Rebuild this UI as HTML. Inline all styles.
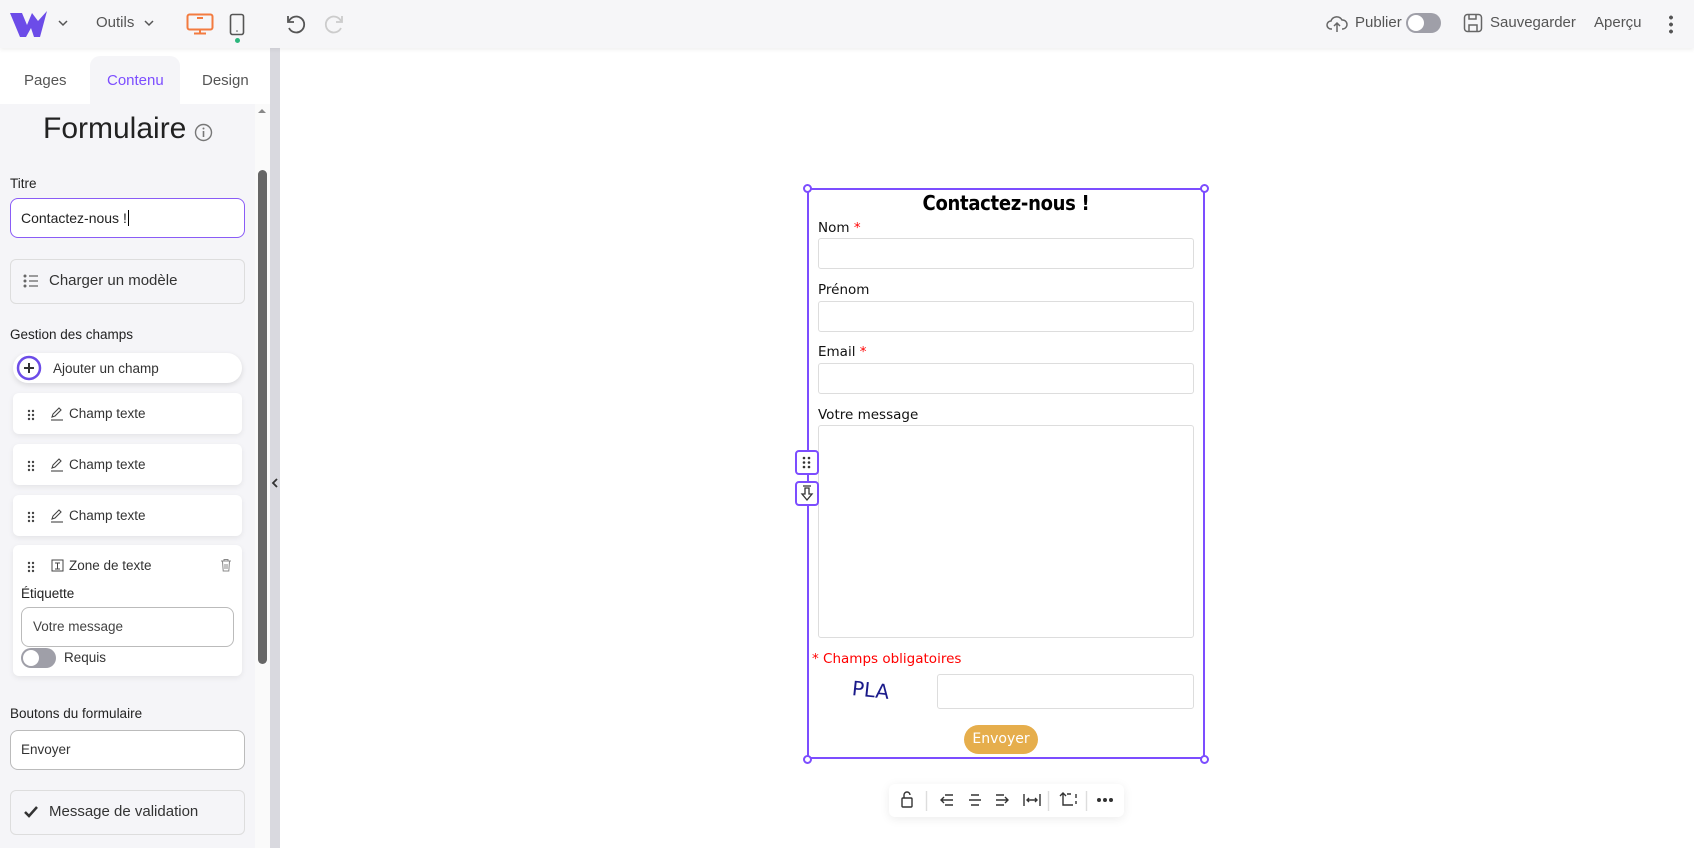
<!DOCTYPE html>
<html><head><meta charset="utf-8"><style>
*{box-sizing:border-box;margin:0;padding:0}
body{width:1694px;height:848px;overflow:hidden;background:#fff;font-family:"Liberation Sans",sans-serif;position:relative;color:#222}
.a{position:absolute}
.hdr{left:0;top:0;width:1694px;height:48px;background:#f6f6f8;box-shadow:0 2px 4px rgba(0,0,0,.06);z-index:5}
.panel{left:0;top:48px;width:255px;height:800px;background:#f5f5f8}
.card{background:#fff;border-radius:6px;box-shadow:0 2px 6px rgba(0,0,0,.07)}
.lbl{font-size:13.5px;color:#222}
.inp{border:1px solid #ddd;border-radius:3px;background:#fff}
.ftxt{font-family:"DejaVu Sans",sans-serif;font-size:13.5px;color:#111}
</style></head><body>
<div class="a hdr">
 <svg class="a" style="left:10px;top:11px" width="38" height="26" viewBox="0 0 38 26"><path d="M0 2 L12 2 L17 14 L22 2 L28 10 L37 0 L30 26 L24 26 L21 17 L16 26 L10 26 Z" fill="#6c4ce8"/></svg>
 <svg class="a" style="left:57px;top:18px" width="12" height="10"><path d="M2 3l4 4 4-4" stroke="#555" stroke-width="1.5" fill="none"/></svg>
 <div class="a" style="left:96px;top:14px;font-size:15px;color:#555">Outils</div>
 <svg class="a" style="left:143px;top:18px" width="12" height="10"><path d="M2 3l4 4 4-4" stroke="#555" stroke-width="1.5" fill="none"/></svg>
 <svg class="a" style="left:186px;top:13px" width="28" height="22"><rect x="1.5" y="1.5" width="25" height="15" rx="2" stroke="#f37b3f" stroke-width="2" fill="none"/><path d="M14 17v3M8 20.5h12M11 5h6" stroke="#f37b3f" stroke-width="2"/></svg>
 <svg class="a" style="left:229px;top:13px" width="16" height="24"><rect x="1.5" y="1.5" width="13" height="20" rx="2" stroke="#555" stroke-width="1.6" fill="none"/><circle cx="8" cy="18" r="0.8" fill="#555"/></svg>
 <div class="a" style="left:235px;top:38px;width:5px;height:5px;border-radius:50%;background:#2cb67d"></div>
 <svg class="a" style="left:284px;top:13px" width="22" height="22"><path d="M5 8a8 8 0 1 1 0 7" stroke="#555" stroke-width="1.8" fill="none"/><path d="M4 3v6h6" stroke="#555" stroke-width="1.8" fill="none"/></svg>
 <svg class="a" style="left:324px;top:13px" width="22" height="22"><path d="M17 8a8 8 0 1 0 0 7" stroke="#ccc" stroke-width="1.8" fill="none"/><path d="M18 3v6h-6" stroke="#ccc" stroke-width="1.8" fill="none"/></svg>
 <svg class="a" style="left:1326px;top:14px" width="22" height="20"><path d="M6 15H5a4 4 0 0 1 0-8 6 6 0 0 1 11-1 4.5 4.5 0 0 1 1 9h-1" stroke="#666" stroke-width="1.5" fill="none"/><path d="M11 18V9M8 12l3-3 3 3" stroke="#666" stroke-width="1.5" fill="none"/></svg>
 <div class="a" style="left:1355px;top:14px;font-size:15px;color:#555">Publier</div>
 <div class="a" style="left:1406px;top:13px;width:35px;height:20px;border-radius:10px;background:#9f9fa8"><div class="a" style="left:2px;top:2px;width:16px;height:16px;border-radius:50%;background:#fff"></div></div>
 <svg class="a" style="left:1463px;top:13px" width="20" height="20"><rect x="1.5" y="1.5" width="17" height="17" rx="3" stroke="#666" stroke-width="1.5" fill="none"/><path d="M6 2v4h7V2M6 18v-6h8v6" stroke="#666" stroke-width="1.5" fill="none"/></svg>
 <div class="a" style="left:1490px;top:14px;font-size:15px;color:#555">Sauvegarder</div>
 <div class="a" style="left:1594px;top:14px;font-size:15px;color:#555">Aperçu</div>
 <div class="a" style="left:1669px;top:14px;width:4px;height:20px;background:radial-gradient(circle,#555 1.8px,transparent 2px) 0 0/4px 7px"></div>
</div>

<div class="a" style="left:0;top:48px;width:255px;height:56px;background:#fff"></div>
<div class="a" style="left:90px;top:56px;width:90px;height:50px;background:#f5f5f8;border-radius:10px 10px 0 0"></div>
<div class="a" style="left:24px;top:72px;font-size:15px;color:#555">Pages</div>
<div class="a" style="left:107px;top:72px;font-size:15px;color:#7c4dff">Contenu</div>
<div class="a" style="left:202px;top:72px;font-size:15px;color:#555">Design</div>
<div class="a panel" style="top:104px;height:744px"></div>
<div class="a" style="left:255px;top:104px;width:15px;height:744px;background:#fafafa"></div>
<svg class="a" style="left:257px;top:107px" width="10" height="8"><path d="M1 6l4-4 4 4z" fill="#888"/></svg>
<div class="a" style="left:258px;top:170px;width:9px;height:494px;border-radius:5px;background:#666"></div>
<div class="a" style="left:270px;top:48px;width:10px;height:800px;background:#d9d9df"></div>
<svg class="a" style="left:271px;top:478px" width="8" height="10"><path d="M6 1L2 5l4 4" stroke="#333" stroke-width="1.8" fill="none"/></svg>

<div class="a" style="left:43px;top:112px;font-size:30px;color:#222">Formulaire</div>
<svg class="a" style="left:194px;top:123px" width="19" height="19"><circle cx="9.5" cy="9.5" r="8" stroke="#777" stroke-width="1.4" fill="none"/><path d="M9.5 8v6" stroke="#777" stroke-width="1.6"/><circle cx="9.5" cy="5.5" r="1" fill="#777"/></svg>
<div class="a lbl" style="left:10px;top:176px">Titre</div>
<div class="a" style="left:10px;top:198px;width:235px;height:40px;border:1.5px solid #8a5cf6;border-radius:8px;background:#fff;font-size:14px;padding:11px 10px">Contactez-nous !<span style="border-left:1px solid #000;margin-left:1px"></span></div>
<div class="a" style="left:10px;top:259px;width:235px;height:45px;border:1px solid #ddd;border-radius:6px;background:#f5f5f8"></div>
<svg class="a" style="left:23px;top:274px" width="16" height="14"><g fill="#666"><circle cx="2" cy="2" r="1.5"/><circle cx="2" cy="7" r="1.5"/><circle cx="2" cy="12" r="1.5"/></g><path d="M6 2h9M6 7h9M6 12h9" stroke="#666" stroke-width="1.2"/></svg>
<div class="a" style="left:49px;top:272px;font-size:15px;color:#333">Charger un modèle</div>
<div class="a lbl" style="left:10px;top:327px">Gestion des champs</div>
<div class="a card" style="left:13px;top:353px;width:229px;height:30px;border-radius:15px;box-shadow:0 2px 6px rgba(0,0,0,.12)"></div>
<svg class="a" style="left:16px;top:355px" width="26" height="26"><circle cx="13" cy="13" r="11" stroke="#6c4ce8" stroke-width="2.5" fill="#fff"/><path d="M13 8v10M8 13h10" stroke="#333" stroke-width="2"/></svg>
<div class="a" style="left:53px;top:361px;font-size:13.5px;color:#333">Ajouter un champ</div>

<div class="a card" style="left:13px;top:393px;width:229px;height:41px"></div>
<div class="a card" style="left:13px;top:444px;width:229px;height:41px"></div>
<div class="a card" style="left:13px;top:495px;width:229px;height:41px"></div>
<div class="a card" style="left:13px;top:545px;width:229px;height:131px"></div>
<svg width="0" height="0" style="position:absolute"><defs><g id="dr" fill="#444"><circle cx="2" cy="2" r="1.2"/><circle cx="6" cy="2" r="1.2"/><circle cx="2" cy="6" r="1.2"/><circle cx="6" cy="6" r="1.2"/><circle cx="2" cy="10" r="1.2"/><circle cx="6" cy="10" r="1.2"/></g><g id="pn"><path d="M2 11l1-3 6-6 2 2-6 6z" stroke="#444" stroke-width="1.1" fill="none"/><path d="M1 14h12" stroke="#444" stroke-width="1.1"/></g></defs></svg>
<svg class="a" style="left:27px;top:409px" width="8" height="12"><use href="#dr"/></svg>
<svg class="a" style="left:50px;top:406px" width="14" height="15"><use href="#pn"/></svg>
<div class="a" style="left:69px;top:406px;font-size:13.5px;color:#333">Champ texte</div>
<svg class="a" style="left:27px;top:460px" width="8" height="12"><use href="#dr"/></svg>
<svg class="a" style="left:50px;top:457px" width="14" height="15"><use href="#pn"/></svg>
<div class="a" style="left:69px;top:457px;font-size:13.5px;color:#333">Champ texte</div>
<svg class="a" style="left:27px;top:511px" width="8" height="12"><use href="#dr"/></svg>
<svg class="a" style="left:50px;top:508px" width="14" height="15"><use href="#pn"/></svg>
<div class="a" style="left:69px;top:508px;font-size:13.5px;color:#333">Champ texte</div>
<svg class="a" style="left:27px;top:561px" width="8" height="12"><use href="#dr"/></svg>
<svg class="a" style="left:50px;top:558px" width="15" height="15"><rect x="2" y="2" width="11" height="11" stroke="#444" fill="none"/><path d="M5 5h5M7.5 5v6M5 11h5" stroke="#444"/></svg>
<div class="a" style="left:69px;top:558px;font-size:13.5px;color:#333">Zone de texte</div>
<svg class="a" style="left:220px;top:558px" width="12" height="14"><path d="M1 3h10M4 3V1.5h4V3M2.5 3.5l.7 9.5h5.6l.7-9.5M5 6v5M7 6v5" stroke="#888" fill="none"/></svg>
<div class="a lbl" style="left:21px;top:586px">Étiquette</div>
<div class="a" style="left:21px;top:607px;width:213px;height:40px;border:1px solid #bbb;border-radius:8px;background:#fff;font-size:13.5px;padding:11px 11px;color:#444">Votre message</div>
<div class="a" style="left:21px;top:648px;width:35px;height:20px;border-radius:10px;background:#9f9fa8"><div class="a" style="left:2px;top:2px;width:16px;height:16px;border-radius:50%;background:#fff"></div></div>
<div class="a" style="left:64px;top:650px;font-size:13.5px;color:#333">Requis</div>

<div class="a lbl" style="left:10px;top:706px">Boutons du formulaire</div>
<div class="a" style="left:10px;top:730px;width:235px;height:40px;border:1px solid #bbb;border-radius:8px;background:#fff;font-size:13.5px;padding:11px 10px;color:#333">Envoyer</div>
<div class="a" style="left:10px;top:790px;width:235px;height:45px;border:1px solid #ddd;border-radius:6px;background:#f5f5f8"></div>
<svg class="a" style="left:23px;top:805px" width="16" height="14"><path d="M2 7l4 4 8-9" stroke="#333" stroke-width="2.5" fill="none"/></svg>
<div class="a" style="left:49px;top:803px;font-size:15px;color:#333">Message de validation</div>

<!-- form -->
<div class="a" style="left:807px;top:188px;width:398px;height:571px;border:2px solid #7c4dff"></div>
<div class="a" style="left:803px;top:184px;width:9px;height:9px;border:2px solid #7c4dff;border-radius:50%;background:#fff"></div>
<div class="a" style="left:1200px;top:184px;width:9px;height:9px;border:2px solid #7c4dff;border-radius:50%;background:#fff"></div>
<div class="a" style="left:803px;top:755px;width:9px;height:9px;border:2px solid #7c4dff;border-radius:50%;background:#fff"></div>
<div class="a" style="left:1200px;top:755px;width:9px;height:9px;border:2px solid #7c4dff;border-radius:50%;background:#fff"></div>
<div class="a" style="left:807px;top:191px;width:398px;text-align:center;font-size:20px;font-weight:bold;color:#000;font-family:'DejaVu Sans Condensed','DejaVu Sans',sans-serif;letter-spacing:-0.3px">Contactez-nous !</div>
<div class="a ftxt" style="left:818px;top:220px">Nom <span style="color:red">*</span></div>
<div class="a inp" style="left:818px;top:238px;width:376px;height:31px"></div>
<div class="a ftxt" style="left:818px;top:282px">Prénom</div>
<div class="a inp" style="left:818px;top:301px;width:376px;height:31px"></div>
<div class="a ftxt" style="left:818px;top:344px">Email <span style="color:red">*</span></div>
<div class="a inp" style="left:818px;top:363px;width:376px;height:31px"></div>
<div class="a ftxt" style="left:818px;top:407px">Votre message</div>
<div class="a inp" style="left:818px;top:425px;width:376px;height:213px"></div>
<div class="a ftxt" style="left:812px;top:651px;color:#f00">* Champs obligatoires</div>
<div class="a" style="left:852px;top:678px;font-size:20px;color:#1a1a8a;font-family:'DejaVu Sans',sans-serif;transform:rotate(6deg)">PLA</div>
<div class="a inp" style="left:937px;top:674px;width:257px;height:35px"></div>
<div class="a" style="left:964px;top:725px;width:74px;height:29px;border-radius:15px;background:#e6ae4c;color:#fff;font-size:14px;text-align:center;line-height:29px;font-family:'DejaVu Sans',sans-serif">Envoyer</div>
<div class="a" style="left:795px;top:450px;width:24px;height:25px;border:2px solid #7c4dff;border-radius:4px;background:#fff"></div>
<svg class="a" style="left:802px;top:456px" width="10" height="13"><g fill="#333"><circle cx="2" cy="2" r="1.3"/><circle cx="7" cy="2" r="1.3"/><circle cx="2" cy="6.5" r="1.3"/><circle cx="7" cy="6.5" r="1.3"/><circle cx="2" cy="11" r="1.3"/><circle cx="7" cy="11" r="1.3"/></g></svg>
<div class="a" style="left:795px;top:481px;width:24px;height:25px;border:2px solid #7c4dff;border-radius:4px;background:#fff"></div>
<svg class="a" style="left:800px;top:484px" width="14" height="18"><path d="M3 2h8M5 4v6H2l5 6 5-6H9V4z" stroke="#333" stroke-width="1.3" fill="none"/></svg>

<!-- toolbar -->
<div class="a" style="left:889px;top:784px;width:235px;height:33px;background:#fff;border-radius:6px;box-shadow:0 2px 10px rgba(0,0,0,.08)"></div>
<svg class="a" style="left:889px;top:784px" width="235" height="33" fill="none" stroke="#333" stroke-width="1.4">
<rect x="13" y="14" width="10" height="9" rx="1"/><path d="M15 14V11a3 3 0 0 1 6 0"/>
<path d="M37.5 7v20M159.5 7v20M197.5 7v20" stroke="#ddd"/>
<path d="M56 11h8M52 16h12M56 21h8M55 13l-3 3 3 3"/>
<path d="M82 11h8M80 16h12M82 21h8"/>
<path d="M107 11h8M107 16h12M107 21h8M116 13l3 3-3 3"/>
<path d="M135 10v12M151 10v12M138 16h10M140 14l-2 2 2 2M146 14l2 2-2 2"/>
<path d="M174 9v12h10M171 12l3-3 3 3M178 10h4M187 10v4M187 17v3"/>
<circle cx="210" cy="16" r="1.3" fill="#333"/><circle cx="216" cy="16" r="1.3" fill="#333"/><circle cx="222" cy="16" r="1.3" fill="#333"/>
</svg>
</body></html>
